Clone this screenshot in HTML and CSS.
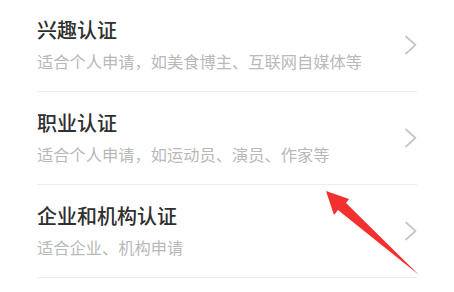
FILE: index.html
```html
<!DOCTYPE html>
<html lang="zh-CN">
<head>
<meta charset="utf-8">
<title>认证类型</title>
<link rel="stylesheet" href="styles.css">
</head>
<body>
<div class="page">
  <ul class="list">
    <li class="row">
      <div class="text">
        <div class="title">兴趣认证</div>
        <div class="desc">适合个人申请，如美食博主、互联网自媒体等</div>
      </div>
      <svg class="chev" viewBox="0 0 12 20" width="12" height="20"><path d="M1 1.5 L10.5 10 L1 18.5" fill="none" stroke="#c6c6c6" stroke-width="1.7" stroke-linecap="round" stroke-linejoin="round"/></svg>
    </li>
    <li class="row">
      <div class="text">
        <div class="title">职业认证</div>
        <div class="desc">适合个人申请，如运动员、演员、作家等</div>
      </div>
      <svg class="chev" viewBox="0 0 12 20" width="12" height="20"><path d="M1 1.5 L10.5 10 L1 18.5" fill="none" stroke="#c6c6c6" stroke-width="1.7" stroke-linecap="round" stroke-linejoin="round"/></svg>
    </li>
    <li class="row">
      <div class="text">
        <div class="title">企业和机构认证</div>
        <div class="desc">适合企业、机构申请</div>
      </div>
      <svg class="chev" viewBox="0 0 12 20" width="12" height="20"><path d="M1 1.5 L10.5 10 L1 18.5" fill="none" stroke="#c6c6c6" stroke-width="1.7" stroke-linecap="round" stroke-linejoin="round"/></svg>
    </li>
  </ul>
  <svg class="arrow" viewBox="0 0 454 292" width="454" height="292">
    <polygon points="326,192 349,200 346,204 419,276 338,211 334,216" fill="#f1302f"/>
  </svg>
</div>
</body>
</html>
```

FILE: styles.css
```css
* { box-sizing: border-box; }
html, body {
  margin: 0;
  padding: 0;
  background: #ffffff;
}
body {
  width: 454px;
  height: 292px;
  overflow: hidden;
  font-family: "Noto Sans CJK SC", "Noto Sans", sans-serif;
}
.page {
  position: relative;
  width: 454px;
  height: 292px;
}
.list {
  list-style: none;
  margin: -1px 37px 0 37px;
  padding: 0;
}
.row {
  display: flex;
  align-items: center;
  justify-content: space-between;
  padding: 21px 0 22px 0;
  border-bottom: 1px solid #ededed;
}
.text {
  display: flex;
  flex-direction: column;
  gap: 13px;
}
.title {
  font-size: 20px;
  line-height: 20px;
  font-weight: 500;
  color: #2f2f2f;
}
.desc {
  font-size: 16.25px;
  line-height: 16px;
  color: #b9b9b9;
}
.chev {
  display: block;
}
.arrow {
  position: absolute;
  left: 0;
  top: 0;
  pointer-events: none;
}
```
